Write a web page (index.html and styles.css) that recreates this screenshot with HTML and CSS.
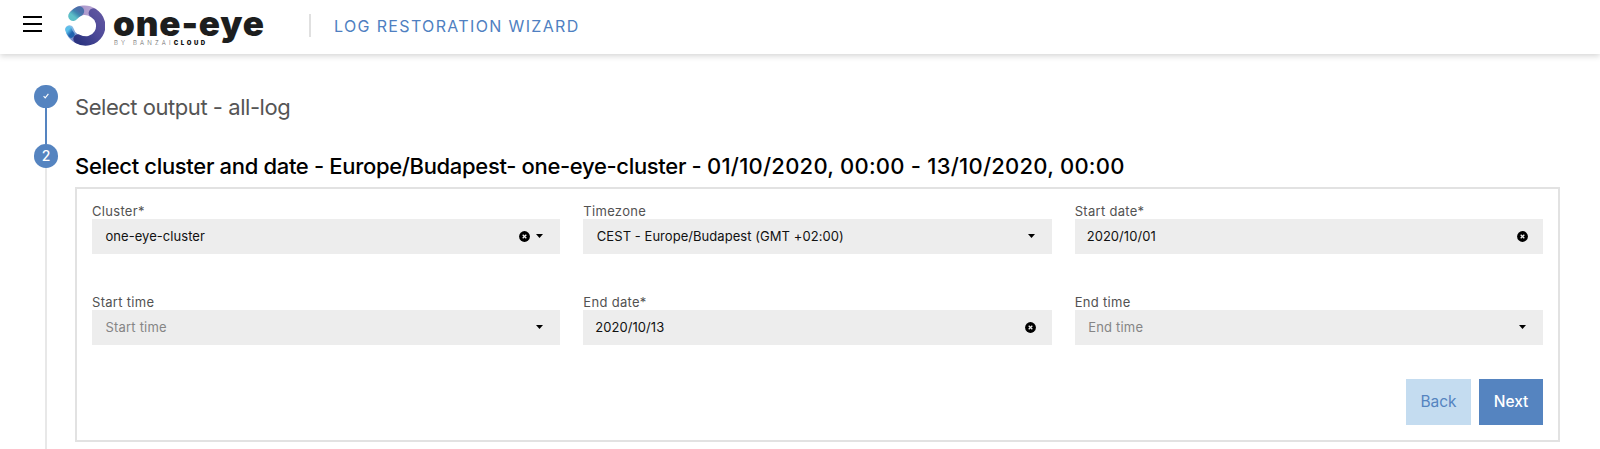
FILE: index.html
```html
<!DOCTYPE html>
<html lang="en">
<head>
<meta charset="utf-8">
<title>Log restoration wizard</title>
<link rel="stylesheet" href="styles.css">
</head>
<body>
<header class="topbar">
  <svg class="menu" viewBox="0 0 19 16"><path d="M0 1h19M0 8h19M0 15h19" stroke="#000" stroke-width="2"/></svg>
  <svg class="ring" viewBox="0 0 40 42" fill="none" stroke-linecap="round">
    <defs>
      <linearGradient id="lilac" x1="0" x2="1"><stop offset="0" stop-color="#a08cc4"/><stop offset="1" stop-color="#b9a6d4"/></linearGradient>
      <linearGradient id="indigo" x1="1" y1="0" x2="0" y2="1"><stop offset="0" stop-color="#5f55a0"/><stop offset=".5" stop-color="#4b4897"/><stop offset="1" stop-color="#2c3480"/></linearGradient>
      <linearGradient id="base" x1="0" y1="0" x2="1" y2="1"><stop offset="0" stop-color="#86bce6"/><stop offset="1" stop-color="#6a5fae"/></linearGradient>
      <linearGradient id="teal" x1="0" y1="1" x2="1" y2="0"><stop offset="0" stop-color="#5ec0c8"/><stop offset=".6" stop-color="#3f86b0"/><stop offset="1" stop-color="#4a70aa"/></linearGradient>
      <linearGradient id="sky" x1="0" y1="0" x2=".6" y2="1"><stop offset="0" stop-color="#5cc0ea"/><stop offset="1" stop-color="#1f62ae"/></linearGradient>
    </defs>
    <path d="M9 10.700A15 15 0 0 1 28 8.800" stroke="url(#lilac)" stroke-width="9.500"/>
    <path d="M4.400 25.500A15.500 15.500 0 0 0 19.700 36.700" stroke="url(#base)" stroke-width="8.500"/>
    <path d="M28.300 9A15 15 0 0 1 13 34.900" stroke="url(#indigo)" stroke-width="9.300"/>
    <path d="M8.200 12Q10.500 9 14.200 7.200" stroke="url(#teal)" stroke-width="10"/>
    <path d="M3.700 25.500Q4.200 28.300 6.300 30.500" stroke="url(#sky)" stroke-width="6.500"/>
  </svg>
  <div class="brand">
    <div class="brand-name">one-eye</div>
    <div class="brand-by">BY BANZAI<b>CLOUD</b></div>
  </div>
  <h1 class="page-title">LOG RESTORATION WIZARD</h1>
</header>
<main class="wizard">
  <div class="rail">
    <span class="dot"><svg class="check" viewBox="0 0 6 6"><path d="M.6 3.200l1.600 1.700L5.400.8" fill="none" stroke="#fff" stroke-width="1.100"/></svg></span>
    <span class="line done"></span>
    <span class="dot">2</span>
    <span class="line todo"></span>
  </div>
  <div class="steps">
    <h2 class="step-title past">Select output - all-log</h2>
    <h2 class="step-title current">Select cluster and date - Europe/Budapest- one-eye-cluster - <span class="range">01/10/2020, 00:00 - 13/10/2020, 00:00</span></h2>
    <section class="panel">
      <div class="fields">
        <div class="field"><span class="label">Cluster*</span><div class="control"><span class="value">one-eye-cluster</span><svg class="clear" viewBox="0 0 11 11"><circle cx="5.500" cy="5.500" r="5.400"/><path d="M3.700 3.700l3.600 3.600M7.300 3.700L3.700 7.300" stroke="#eee" stroke-width="1.300"/></svg><svg class="caret" viewBox="0 0 7 4"><path d="M0 0h7L3.500 4z"/></svg></div></div>
        <div class="field"><span class="label">Timezone</span><div class="control"><span class="value">CEST - Europe/Budapest (GMT +02:00)</span><svg class="caret" viewBox="0 0 7 4"><path d="M0 0h7L3.500 4z"/></svg></div></div>
        <div class="field"><span class="label">Start date*</span><div class="control date"><span class="value">2020/10/01</span><svg class="clear" viewBox="0 0 11 11"><circle cx="5.500" cy="5.500" r="5.400"/><path d="M3.700 3.700l3.600 3.600M7.300 3.700L3.700 7.300" stroke="#eee" stroke-width="1.300"/></svg></div></div>
        <div class="field"><span class="label">Start time</span><div class="control"><span class="value placeholder">Start time</span><svg class="caret" viewBox="0 0 7 4"><path d="M0 0h7L3.500 4z"/></svg></div></div>
        <div class="field"><span class="label">End date*</span><div class="control date"><span class="value">2020/10/13</span><svg class="clear" viewBox="0 0 11 11"><circle cx="5.500" cy="5.500" r="5.400"/><path d="M3.700 3.700l3.600 3.600M7.300 3.700L3.700 7.300" stroke="#eee" stroke-width="1.300"/></svg></div></div>
        <div class="field"><span class="label">End time</span><div class="control"><span class="value placeholder">End time</span><svg class="caret" viewBox="0 0 7 4"><path d="M0 0h7L3.500 4z"/></svg></div></div>
      </div>
      <div class="actions">
        <button class="btn back">Back</button>
        <button class="btn next">Next</button>
      </div>
    </section>
  </div>
</main>
</body>
</html>
```
FILE: styles.css
```css
* { box-sizing: border-box; margin: 0; padding: 0; }
body {
  height: 449px;
  overflow: hidden;
  background: #fff;
  color: #000;
  font-family: Inter, "Liberation Sans", sans-serif;
  display: flex;
  flex-direction: column;
}
svg { display: block; flex: none; }
.topbar {
  flex: none;
  height: 54px;
  display: flex;
  align-items: flex-start;
  padding-left: 23px;
  box-shadow: 0 2px 6px rgba(0, 0, 0, .17);
}
.menu { width: 19px; height: 16px; margin-top: 16px; }
.ring { width: 40px; height: 42px; margin: 4px 0 0 23px; }
.brand { width: 196px; margin-left: 8px; color: #1d1e1e; white-space: nowrap; }
.brand-name { height: 38px; line-height: 46px; font-size: 35px; font-weight: 900; letter-spacing: .850px; }
.brand-by { font-size: 6px; line-height: 9px; letter-spacing: 3.150px; color: #666; font-weight: 300; padding-left: 1px; }
.brand-by b { font-weight: 900; color: #111; letter-spacing: 2.600px; }
.page-title {
  height: 23px;
  margin-top: 14px;
  border-left: 2px solid #e0e0e0;
  padding-left: 23px;
  font-size: 16px;
  line-height: 24px;
  font-weight: 400;
  letter-spacing: 1.350px;
  color: #4f7fc1;
}
.wizard { flex: 1; min-height: 0; display: flex; padding: 30.500px 40px 0 34px; }
.rail { width: 24px; display: flex; flex-direction: column; align-items: center; }
.dot {
  flex: none;
  width: 23.500px;
  height: 23.500px;
  border-radius: 50%;
  background: #5584c0;
  color: #fff;
  font-size: 14px;
  font-weight: 500;
  display: flex;
  align-items: center;
  justify-content: center;
}
.check { width: 6px; height: 6px; }
.line { width: 2px; }
.done { flex: none; height: 36px; background: #5584c0; }
.todo { flex: 1; background: #e8e8e8; }
.steps { flex: 1; padding-left: 17px; padding-top: 7.500px; }
.step-title { font-size: 22px; line-height: 30px; font-weight: 400; white-space: nowrap; }
.past { color: #555; height: 58.500px; letter-spacing: -.460px; }
.current { font-weight: 500; height: 36px; letter-spacing: -.330px; }
.range { letter-spacing: .240px; }
.panel { height: 255px; border: 2px solid #e2e2e2; padding: 13px 15px 0; }
.fields { display: grid; grid-template-columns: repeat(3, 1fr); column-gap: 23px; row-gap: 39px; }
.field { display: flex; flex-direction: column; }
.label { font-size: 13px; line-height: 19px; height: 17px; color: #525252; letter-spacing: .3px; }
.control { height: 35px; background: #ededed; display: flex; align-items: center; padding: 0 17px 0 13.500px; font-size: 13px; letter-spacing: .050px; }
.value { flex: 1; color: #111; }
.placeholder { color: #858585; letter-spacing: .2px; }
.date { padding: 0 15.500px 0 12px; }
.clear { width: 11px; height: 11px; }
.caret { width: 7px; height: 4px; margin-left: 6px; }
.actions { display: flex; justify-content: flex-end; gap: 8px; margin-top: 34px; }
.btn { width: 64px; height: 46px; border: 0; font: 500 15.500px Inter, sans-serif; }
.back { width: 65px; background: #c4dcf0; color: #5584c0; font-weight: 400; }
.next { background: #5584c0; color: #fff; }
```
